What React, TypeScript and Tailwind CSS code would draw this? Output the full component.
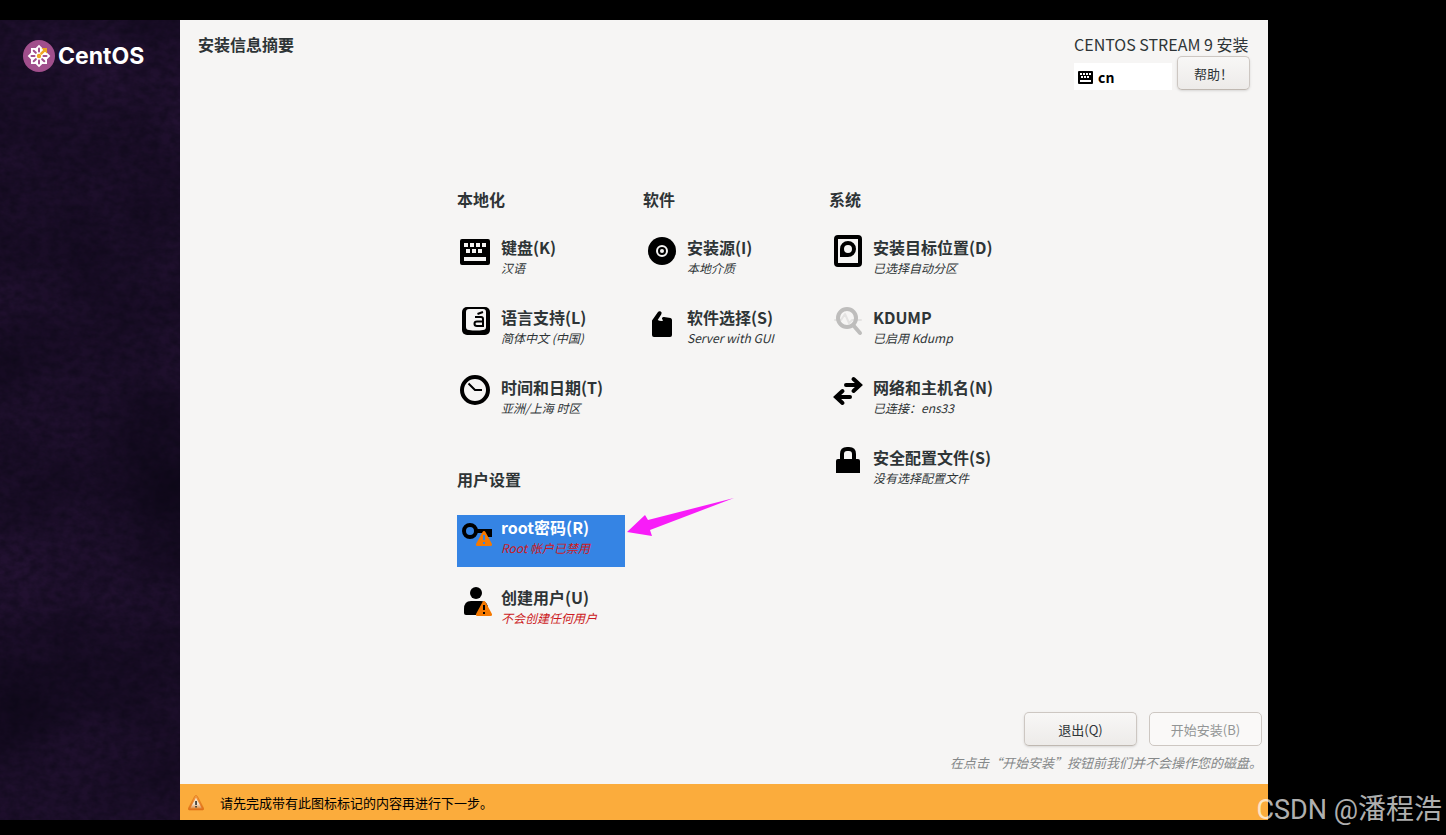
import { useState } from 'react';
import type { ReactNode } from 'react';
import clsx from 'clsx';

type Spoke = {
  id: string;
  title: string;
  status: string;
  icon: ReactNode;
  warning?: boolean;
};

type Category = {
  title: string;
  spokes: Spoke[];
};

function KeyboardIcon({ className }: { className?: string }) {
  return (
    <svg viewBox="0 0 32 32" className={className} aria-hidden="true">
      <path
        fillRule="evenodd"
        d="M2 4h26a2 2 0 0 1 2 2v22a2 2 0 0 1-2 2H2a2 2 0 0 1-2-2V6a2 2 0 0 1 2-2ZM4 8v4h4V8ZM10 8v4h4V8ZM16 8v4h4V8ZM22 8v4h4V8ZM6 14v4h4v-4ZM12 14v4h4v-4ZM18 14v4h4v-4ZM4 22v4h22v-4Z"
      />
    </svg>
  );
}

function LanguageIcon() {
  return (
    <svg viewBox="0 0 32 32" className="size-8" aria-hidden="true">
      <rect x="2" y="2" width="28" height="28" rx="5" />
      <path d="M9 4h14q3 0 3 3v15q0 3-3 3-7 1-14 0-3 0-3-3V7q0-3 3-3Z" fill="#f6f5f4" />
      <path d="M15 12h6q2 0 2 2v7h-6q-2.500 0-2.500-2.300t2.500-2.300h6M17.500 9l5.500-2" fill="none" stroke="#000" strokeWidth="2" />
    </svg>
  );
}

function ClockIcon() {
  return (
    <svg viewBox="0 0 32 32" className="size-8" aria-hidden="true">
      <circle cx="15" cy="15" r="13" fill="none" stroke="#000" strokeWidth="4" />
      <path d="M8.500 8.500 15 15h7" fill="none" stroke="#000" strokeWidth="2" strokeLinejoin="round" />
    </svg>
  );
}

function DiscIcon() {
  return (
    <svg viewBox="0 0 32 32" className="size-8" aria-hidden="true">
      <circle cx="16" cy="16" r="14" />
      <circle cx="16" cy="16" r="5" fill="none" stroke="#f6f5f4" strokeWidth="2" />
      <circle cx="16" cy="16" r="2" fill="#f6f5f4" />
    </svg>
  );
}

function PackageIcon() {
  return (
    <svg viewBox="0 0 32 32" className="size-8" aria-hidden="true">
      <path d="M6 15.500 11.800 7.200Q13 5.500 14.800 6.500q1.600 1.200.4 3L11.700 15q2.300 1.200 5.100.8l.2-.8q-1.300-.4-1-1.700.4-1.500 2-1.300l6.500 1Q26 13.300 26 15v15q0 2-2 2H8q-2 0-2-2Z" />
    </svg>
  );
}

function DriveIcon() {
  return (
    <svg viewBox="0 0 32 32" className="size-8" aria-hidden="true">
      <rect x="4" y="2" width="24" height="28" rx="2" fill="none" stroke="#000" strokeWidth="4" />
      <path fillRule="evenodd" d="M16 6a8 8 0 1 1 0 16H8v-8a8 8 0 0 1 8-8Zm0 4a4 4 0 1 0 0 8 4 4 0 0 0 0-8Z" />
    </svg>
  );
}

function KdumpIcon() {
  return (
    <svg viewBox="0 0 32 32" className="size-8" aria-hidden="true" fill="none" strokeLinecap="round">
      <path d="M3 15h6l4-6 4 9 3-3h9" stroke="#e4e3e2" strokeWidth="2" strokeLinejoin="round" />
      <circle cx="15" cy="13" r="9" stroke="#bebdbc" strokeWidth="4" />
      <path d="m21.500 20.500 6.500 7.500" stroke="#bebdbc" strokeWidth="4" />
    </svg>
  );
}

function NetworkIcon() {
  return (
    <svg viewBox="0 0 32 32" className="size-8" aria-hidden="true">
      <g fill="none" stroke="#000" strokeWidth="4" strokeLinecap="round">
        <path d="M14 10h13M21.500 4l6.500 6-6.500 6" />
        <path d="M18 22H5M10.500 16 4 22l6.500 6" />
      </g>
    </svg>
  );
}

function LockIcon() {
  return (
    <svg viewBox="0 0 32 32" className="size-8" aria-hidden="true">
      <path d="M10 15V9q0-5 5-5h2q5 0 5 5v6" fill="none" stroke="#000" strokeWidth="4" />
      <path d="M6 14h20q2 0 2 2v12H4V16q0-2 2-2Z" />
    </svg>
  );
}

function WarningBadge({ mark }: { mark: string }) {
  return (
    <g>
      <path d="M24 16q1 0 1.600 1.200l6.100 11.300q1.200 2.500-1.200 2.500h-13q-2.400 0-1.200-2.500l6.100-11.300Q23 16 24 16Z" fill="#f57900" />
      <path d="M23 20h2v5h-2ZM23 27h2v2h-2Z" fill={mark} />
    </g>
  );
}

function KeyIcon() {
  return (
    <svg viewBox="0 0 32 32" className="size-8" aria-hidden="true">
      <circle cx="10" cy="16" r="6" fill="none" stroke="#000" strokeWidth="4" />
      <path d="M16 14h16v8h-6v-4H16Z" />
      <WarningBadge mark="#3584e4" />
    </svg>
  );
}

function UserIcon() {
  return (
    <svg viewBox="0 0 32 32" className="size-8" aria-hidden="true">
      <circle cx="16" cy="8" r="6" />
      <path d="M11 16h10q7 0 7 8v6H6q-2 0-2-2v-4q0-8 7-8Z" />
      <WarningBadge mark="#000" />
    </svg>
  );
}

// the petal at 45 degrees is covered by the orange arrow
const petals = [0, 90, 135, 180, 225, 270, 315];

function CentosMark() {
  return (
    <svg viewBox="0 0 32 32" className="size-8" aria-hidden="true">
      <circle cx="16" cy="16" r="16" fill="#a14f8c" />
      <g fill="#fff">
        <rect x="8" y="8" width="16" height="16" />
        <rect x="8" y="8" width="16" height="16" transform="rotate(45 16 16)" />
      </g>
      <path d="M18.500 8H24v5.500l-2-1.700-3.500 3.200-1.700-1.700 3.400-3.300Z" fill="#efa724" />
      {petals.map((angle) => (
        <path
          key={angle}
          d="M16 11.500V8.500"
          stroke="#a14f8c"
          strokeWidth="2"
          strokeLinecap="round"
          transform={`rotate(${angle} 16 16)`}
        />
      ))}
      <circle cx="16" cy="16" r="2.200" fill="#efa724" />
    </svg>
  );
}

// Dark brushed backdrop behind the logo
function SidebarTexture() {
  return (
    <svg className="absolute inset-0 h-full w-full" preserveAspectRatio="none" aria-hidden="true">
      <defs>
        <filter id="clouds" x="0" y="0" width="100%" height="100%" colorInterpolationFilters="sRGB">
          <feTurbulence type="fractalNoise" baseFrequency="0.008 0.008" numOctaves="6" seed="8" />
          <feColorMatrix values="0 0 0 0 0.14  0 0 0 0 0.07  0 0 0 0 0.2  1.4 0 0 0 -0.15" />
        </filter>
        <filter id="strokes" x="0" y="0" width="100%" height="100%" colorInterpolationFilters="sRGB">
          <feTurbulence type="fractalNoise" baseFrequency="0.1 0.14" numOctaves="3" seed="3" />
          <feColorMatrix values="0 0 0 0 0.04  0 0 0 0 0.03  0 0 0 0 0.08  0.9 0 0 0 -0.25" />
        </filter>
      </defs>
      <rect width="100%" height="100%" filter="url(#clouds)" />
      <rect width="100%" height="100%" filter="url(#strokes)" />
    </svg>
  );
}

function BarWarningIcon() {
  return (
    <svg viewBox="0 0 16 16" className="size-4" aria-hidden="true">
      <defs>
        <linearGradient id="warn" x1="0" y1="0" x2="0" y2="1">
          <stop offset="0" stopColor="#f39a3c" />
          <stop offset="1" stopColor="#e0701a" />
        </linearGradient>
        <linearGradient id="warnInner" x1="0" y1="0" x2="0" y2="1">
          <stop offset="0" stopColor="#fbd9ae" />
          <stop offset="0.6" stopColor="#f0e2d0" />
          <stop offset="1" stopColor="#e08a3c" />
        </linearGradient>
      </defs>
      <path d="M8 .5q1 0 1.500 1l6 11.500q.8 2-1 2h-13q-1.800 0-1-2l6-11.500Q7 .5 8 .5Z" fill="url(#warn)" stroke="#d96a10" strokeWidth="0.500" />
      <path d="M8 2.500 13.800 13.500H2.200Z" fill="url(#warnInner)" />
      <path d="M7.200 6h1.700v4H7.200ZM7.200 11h1.700v1.500H7.200Z" fill="#3a3a36" />
    </svg>
  );
}

const columns: Category[][] = [
  [
    {
      title: '本地化',
      spokes: [
        { id: 'keyboard', title: '键盘(K)', status: '汉语', icon: <KeyboardIcon className="size-8" /> },
        { id: 'language', title: '语言支持(L)', status: '简体中文 (中国)', icon: <LanguageIcon /> },
        { id: 'datetime', title: '时间和日期(T)', status: '亚洲/上海 时区', icon: <ClockIcon /> },
      ],
    },
    {
      title: '用户设置',
      spokes: [
        { id: 'root', title: 'root密码(R)', status: 'Root 帐户已禁用', icon: <KeyIcon />, warning: true },
        { id: 'user', title: '创建用户(U)', status: '不会创建任何用户', icon: <UserIcon />, warning: true },
      ],
    },
  ],
  [
    {
      title: '软件',
      spokes: [
        { id: 'source', title: '安装源(I)', status: '本地介质', icon: <DiscIcon /> },
        { id: 'packages', title: '软件选择(S)', status: 'Server with GUI', icon: <PackageIcon /> },
      ],
    },
  ],
  [
    {
      title: '系统',
      spokes: [
        { id: 'storage', title: '安装目标位置(D)', status: '已选择自动分区', icon: <DriveIcon /> },
        { id: 'kdump', title: 'KDUMP', status: '已启用 Kdump', icon: <KdumpIcon /> },
        { id: 'network', title: '网络和主机名(N)', status: '已连接：ens33', icon: <NetworkIcon /> },
        { id: 'security', title: '安全配置文件(S)', status: '没有选择配置文件', icon: <LockIcon /> },
      ],
    },
  ],
];

function SpokeItem({ spoke, selected, onSelect }: { spoke: Spoke; selected: boolean; onSelect: () => void }) {
  return (
    <button
      type="button"
      onClick={onSelect}
      className={clsx('flex h-[52px] w-full items-start gap-[9px] pl-[3px] text-left whitespace-nowrap', selected && 'bg-[#3584e4]')}
    >
      <span className="shrink-0">{spoke.icon}</span>
      <span className="flex flex-col">
        <span className={clsx('text-base leading-6 font-bold', selected && 'text-white')}>{spoke.title}</span>
        <span className={clsx('text-xs leading-[18px] italic', spoke.warning && 'text-[#cc1a22]')}>{spoke.status}</span>
      </span>
    </button>
  );
}

export default function App() {
  const [selected, setSelected] = useState('root');

  return (
    <div className="relative flex min-h-screen overflow-hidden bg-black pt-5 pr-[178px] pb-[15px] font-['Noto_Sans_CJK_SC',sans-serif] text-[#2e3436]">
      {/* Sidebar */}
      <aside className="relative w-[180px] shrink-0 bg-[#10081b]">
        <SidebarTexture />
        <div className="relative flex items-center gap-[3px] pt-5 pl-[23px]">
          <CentosMark />
          <span className="font-['Inter',sans-serif] text-[23px] leading-8 font-bold text-white">CentOS</span>
        </div>
      </aside>

      <div className="flex min-w-0 flex-1 flex-col bg-[#f6f5f4]">
        {/* Header */}
        <header className="flex items-start justify-between pt-3 pr-[18px] pl-[18px]">
          <h1 className="text-base leading-6 font-bold">安装信息摘要</h1>
          <div className="flex flex-col">
            <p className="text-base leading-6">CENTOS STREAM 9 安装</p>
            <div className="flex items-end gap-[5px]">
              <button type="button" className="flex h-[27px] w-[98px] items-center gap-1 bg-white pl-1 text-sm font-bold text-black">
                <KeyboardIcon className="size-4" />
                cn
              </button>
              <button
                type="button"
                className="h-[34px] w-[73px] rounded-[5px] border border-[#cdc7c2] border-b-[#bfb8b1] bg-linear-to-b from-[#f8f7f6] to-[#edebe9] pt-0.5 text-[13px] shadow-sm"
              >
                帮助！
              </button>
            </div>
          </div>
        </header>

        {/* Spokes */}
        <main className="flex flex-1 justify-center gap-[18px] pt-[97px] pl-[6px]">
          {columns.map((categories, i) => (
            <div key={i} className="flex w-[168px] flex-col gap-10">
              {categories.map((category) => (
                <section key={category.title}>
                  <h2 className="text-base leading-6 font-bold">{category.title}</h2>
                  <ul className="mt-6 flex flex-col gap-[18px]">
                    {category.spokes.map((spoke) => (
                      <li key={spoke.id} className="relative">
                        <SpokeItem spoke={spoke} selected={selected === spoke.id} onSelect={() => setSelected(spoke.id)} />
                        {spoke.id === 'root' && (
                          <svg
                            viewBox="0 0 108 38"
                            className="pointer-events-none absolute bottom-[31px] left-full ml-0.5 h-[38px] w-[108px]"
                            aria-hidden="true"
                          >
                            <path d="M0 34 18 17l3 5L107 0 23 32l2 6Z" fill="#f81cf8" />
                          </svg>
                        )}
                      </li>
                    ))}
                  </ul>
                </section>
              ))}
            </div>
          ))}
        </main>

        {/* Actions */}
        <footer className="flex flex-col items-end pr-[6px] pb-3">
          <div className="flex gap-3">
            <button
              type="button"
              className="h-[34px] w-[113px] rounded-[5px] border border-[#cdc7c2] border-b-[#bfb8b1] bg-linear-to-b from-[#f8f7f6] to-[#edebe9] pt-0.5 text-[13px] shadow-sm"
            >
              退出(Q)
            </button>
            <button type="button" disabled className="h-[34px] w-[113px] rounded-[5px] border border-[#cdc7c2] bg-[#faf9f8] pt-0.5 text-[13px] text-[#929595]">
              开始安装(B)
            </button>
          </div>
          <p className="mt-2 text-[13px] leading-[18px] text-[#858889] italic">在点击“开始安装”按钮前我们并不会操作您的磁盘。</p>
        </footer>

        <div role="status" className="flex h-9 items-center gap-4 bg-[#fbac3c] pt-0.5 pl-2 text-[13px] text-black">
          <BarWarningIcon />
          <span>请先完成带有此图标标记的内容再进行下一步。</span>
        </div>
      </div>

      {/* Author credit */}
      <div className="absolute right-1 bottom-[5px] flex items-baseline leading-10 text-white/70">
        <span className="font-['Roboto',sans-serif] text-[27px] whitespace-pre">CSDN @</span>
        <span className="text-[28px]">潘程浩</span>
      </div>
    </div>
  );
}
